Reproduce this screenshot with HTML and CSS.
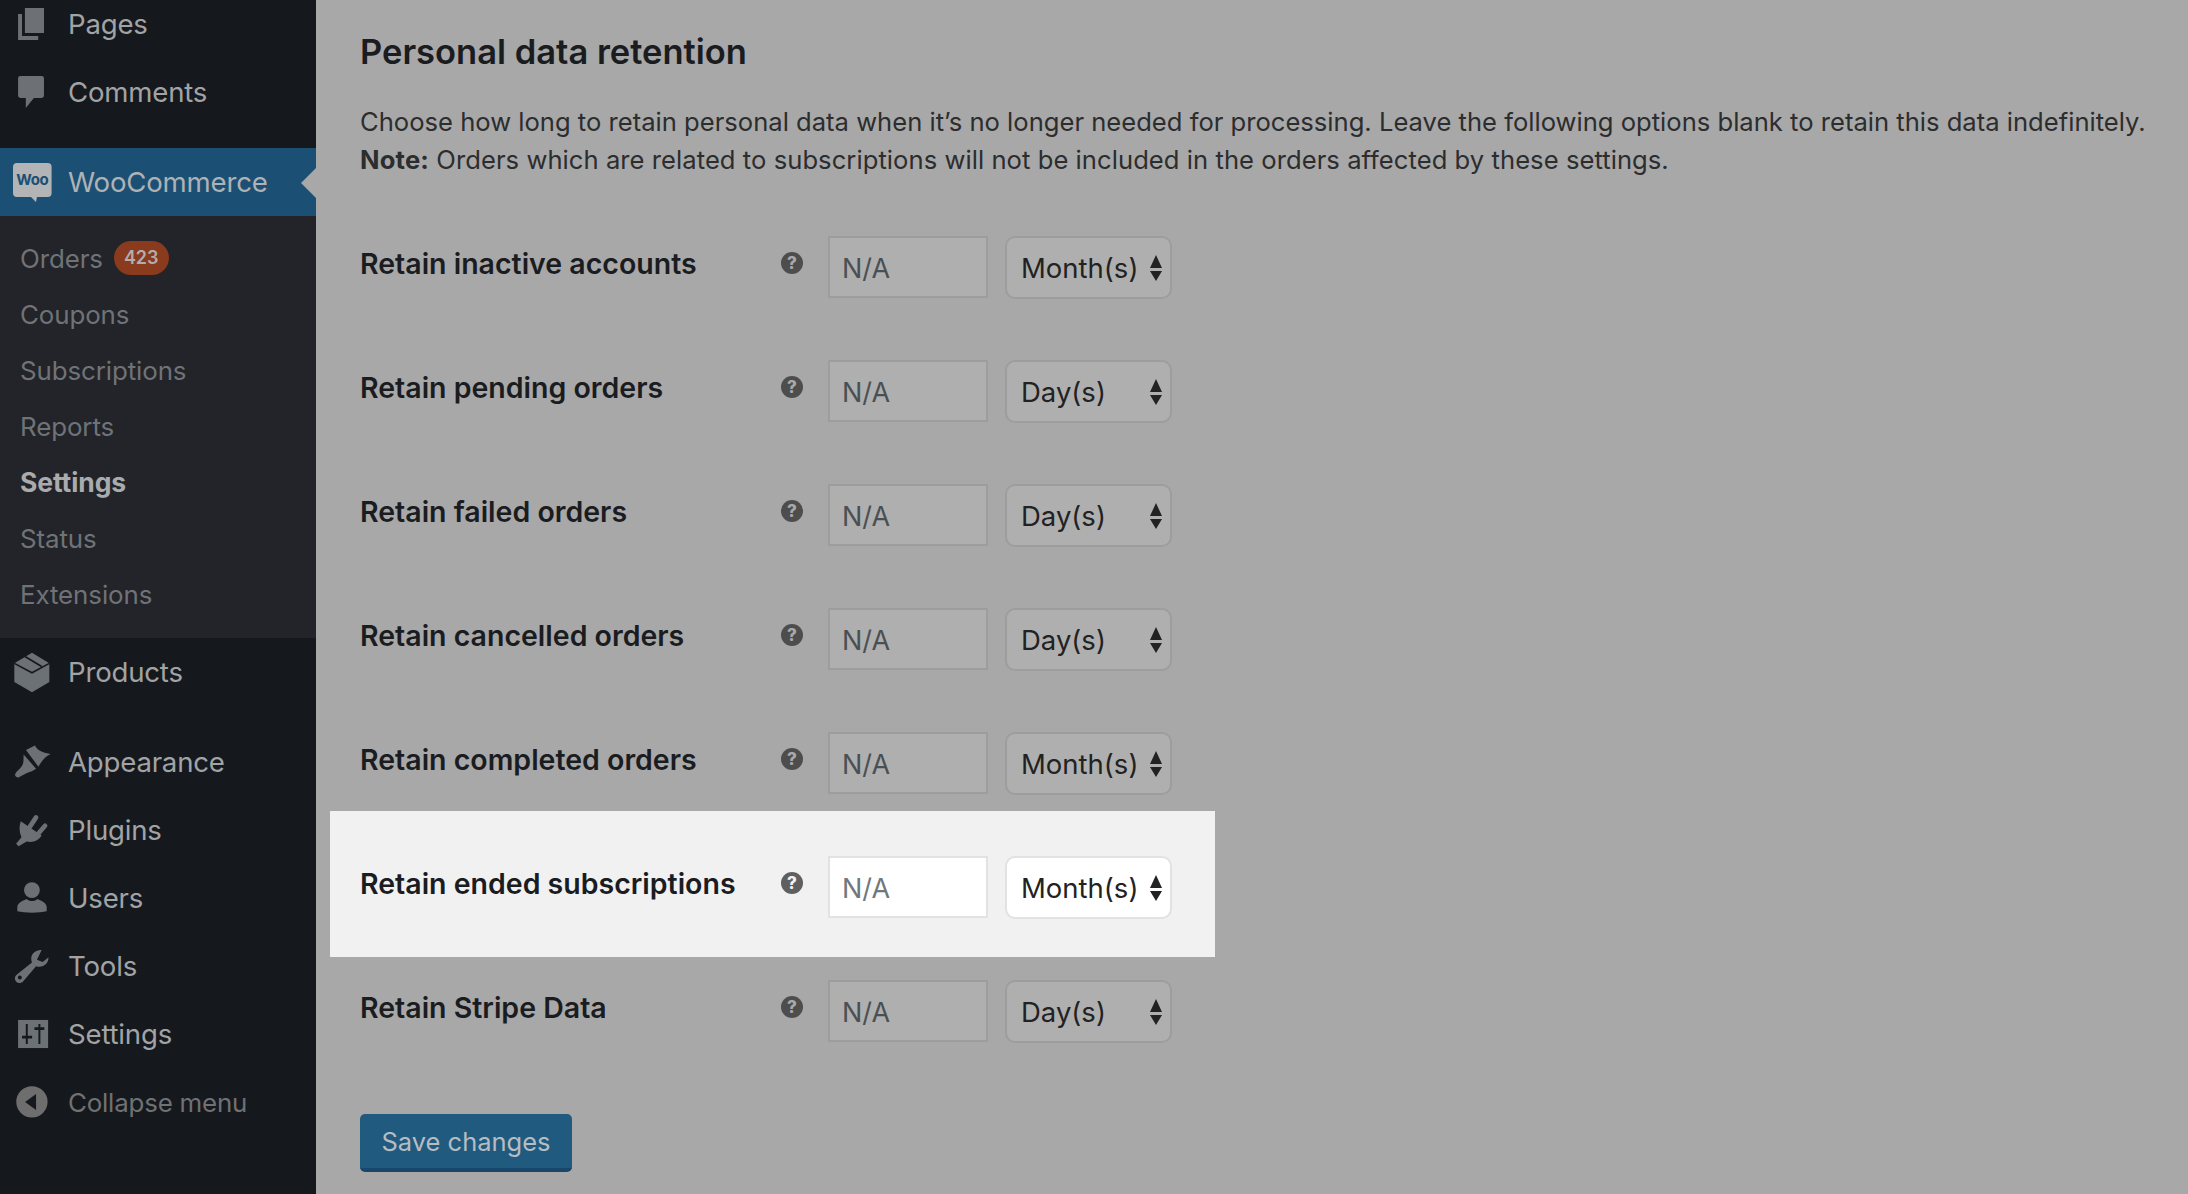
FILE: index.html
```html
<!DOCTYPE html>
<html lang="en">
<head>
<meta charset="utf-8">
<title>Personal data retention</title>
<link rel="stylesheet" href="styles.css">
</head>
<body>
<div class="page">
  <nav class="sidebar">
    <ul class="menu menu-top">
      <li class="item"><svg class="icon" viewBox="0 0 20 20"><path d="M5.500 1.100h10.600V15H5.500z"/><path d="M1.700 4.400h2.200v12.300h9v2.200H1.700z"/></svg><span>Pages</span></li>
      <li class="item"><svg class="icon" viewBox="0 0 20 20"><path d="M3 1.100h11.800a1.300 1.300 0 0 1 1.300 1.300V12a1.300 1.300 0 0 1-1.300 1.300H10.500L6 18.900v-5.600H3A1.300 1.300 0 0 1 1.700 12V2.400A1.300 1.300 0 0 1 3 1.100z"/></svg><span>Comments</span></li>
    </ul>
    <div class="item item-current">
      <svg class="icon icon-woo" viewBox="0 0 40 40"><path class="woo-bubble" d="M4 1h30.600a4 4 0 0 1 4 4v26a4 4 0 0 1-4 4H24l-1 5-5-5H4a4 4 0 0 1-4-4V5a4 4 0 0 1 4-4z"/><text class="woo-text" x="19.300" y="23">Woo</text></svg>
      <span>WooCommerce</span>
    </div>
    <ul class="submenu">
      <li class="sub-item">Orders<b class="badge">423</b></li>
      <li class="sub-item">Coupons</li>
      <li class="sub-item">Subscriptions</li>
      <li class="sub-item">Reports</li>
      <li class="sub-item sub-current">Settings</li>
      <li class="sub-item">Status</li>
      <li class="sub-item">Extensions</li>
    </ul>
    <div class="item"><svg class="icon" viewBox="0 0 20 20"><path d="M9.440-.74l9.630 5.940v10.300L9.440 21.300-.37 15.500V5.200z"/><path class="icon-cut" d="M-.37 5.200l9.810 5.200 9.630-5.200M5.550 1.400l9.250 5.560"/></svg><span>Products</span></div>
    <ul class="menu menu-gap">
      <li class="item"><svg class="icon" viewBox="0 0 20 20"><path d="M6.100 3.300L11.100.9c.9 1.900 2.900 3.900 8.700 4.700-2.300.9-4.800 3.400-6.800 7z"/><path d="M4.800 5.900l6.900 7.800-1.600 1c-2 1-4.300 1.500-7.600 3.700-1 .7-2.900-.5-2.400-1.800 1.300-2.200 4.900-3.800 4.600-8z"/></svg><span>Appearance</span></li>
      <li class="item"><svg class="icon" viewBox="0 0 20 20"><path d="M3.200 5.200l11.600 7.900c-1.800 2.900-4.800 4.100-8.300 3.300L2 19 .6 17.700l3-3.700C2.200 11 2.300 8 3.200 5.200z"/><path class="icon-prong" d="M11.700 3L8.300 8.100M16.700 7.600L13 11.900"/></svg><span>Plugins</span></li>
      <li class="item"><svg class="icon" viewBox="0 0 20 20"><circle cx="9.400" cy="5.600" r="4.400"/><path d="M1.300 17.400V15c0-2 2.700-3.400 5.200-4.400 1.400 1.500 4.500 1.500 5.900 0 2.500 1 5.200 2.400 5.200 4.400v2.400c-4 1-12.300 1-16.300 0z"/></svg><span>Users</span></li>
      <li class="item"><svg class="icon" viewBox="0 0 20 20"><path fill-rule="evenodd" d="M14.800 1.100C11.800.8 9 3 9 6c0 .7.1 1.400.4 2L.9 14.800c-1.200 1-1.300 2.800-.2 3.900 1.100 1.100 2.900 1 3.900-.2l7.100-8.400c.6.200 1.200.3 1.800.3 3 0 5.300-2.500 5.100-5.300l-3.200 2.700-3.200-1.300zM2.700 15.300a1.100 1.100 0 1 1 0 2.200 1.100 1.100 0 0 1 0-2.200z"/></svg><span>Tools</span></li>
      <li class="item"><svg class="icon" viewBox="0 0 20 20"><path d="M1.700 2.200h16.700v15.600H1.700z"/><path class="icon-knock" d="M6 4.400h1.100v11.200H6zM3.900 11h5.600v1.500H3.900zM13 4.400h1.100v11.200H13zM10.800 6.300h5.500v1.500h-5.500z"/></svg><span>Settings</span></li>
      <li class="item item-collapse"><svg class="icon" viewBox="0 0 20 20"><path fill-rule="evenodd" d="M9.400 1.200a8.700 8.700 0 1 1 0 17.400 8.700 8.700 0 0 1 0-17.400zM11.700 5.600v8.800L5.600 10z"/></svg><span>Collapse menu</span></li>
    </ul>
  </nav>
  <main class="content">
    <h2 class="title">Personal data retention</h2>
    <p class="intro">Choose how long to retain personal data when it’s no longer needed for processing. Leave the following options blank to retain this data indefinitely.<br><strong>Note:</strong> <span class="intro-note">Orders which are related to subscriptions will not be included in the orders affected by these settings.</span></p>
    <div class="rows">
      <div class="row"><label class="label">Retain inactive accounts</label><span class="help">?</span><span class="field">N/A</span><span class="select">Month(s)<i class="arrows"></i></span></div>
      <div class="row"><label class="label">Retain pending orders</label><span class="help">?</span><span class="field">N/A</span><span class="select">Day(s)<i class="arrows"></i></span></div>
      <div class="row"><label class="label">Retain failed orders</label><span class="help">?</span><span class="field">N/A</span><span class="select">Day(s)<i class="arrows"></i></span></div>
      <div class="row"><label class="label">Retain cancelled orders</label><span class="help">?</span><span class="field">N/A</span><span class="select">Day(s)<i class="arrows"></i></span></div>
      <div class="row"><label class="label">Retain completed orders</label><span class="help">?</span><span class="field">N/A</span><span class="select">Month(s)<i class="arrows"></i></span></div>
      <div class="row row-hl"><label class="label">Retain ended subscriptions</label><span class="help">?</span><span class="field">N/A</span><span class="select">Month(s)<i class="arrows"></i></span></div>
      <div class="row"><label class="label">Retain Stripe Data</label><span class="help">?</span><span class="field">N/A</span><span class="select">Day(s)<i class="arrows"></i></span></div>
    </div>
    <button class="save" type="button">Save changes</button>
  </main>
</div>
</body>
</html>
```

FILE: styles.css
```css
* { box-sizing: border-box; }
html, body { margin: 0; height: 100%; overflow: hidden; }
body { background: #a8a8a8; font-family: Inter, "Liberation Sans", sans-serif; color: #1c1e21; }
ul { list-style: none; margin: 0; padding: 0; }
.page { display: flex; height: 1194px; overflow: hidden; }

.sidebar { flex: 0 0 316px; background: #15191e; color: #a2a3a5; font-size: 27.600px; letter-spacing: -0.2px; }
.menu-top { margin-top: -10px; margin-bottom: 22px; }
.menu-gap { margin-top: 22px; }
.item { height: 68px; display: flex; align-items: center; padding-left: 15px; position: relative; }
.icon { width: 36px; height: 36px; flex: none; margin-right: 17px; fill: #6c7175; overflow: visible; }
.icon-cut { fill: none; stroke: #15191e; stroke-width: 0.9; }
.icon-prong { fill: none; stroke: #6c7175; stroke-width: 2.600; stroke-linecap: round; }
.icon-knock { fill: #15191e; }
.item-current { background: #1b4f74; color: #aeb2b5; }
.item-current::after { content: ""; position: absolute; right: 0; top: 20px; border: 15px solid transparent; border-right-color: #a8a8a8; border-left-width: 0; }
.icon-woo { width: 40px; height: 40px; margin-left: -2px; margin-right: 15px; }
.woo-bubble { fill: #b2b4b5; }
.woo-text { fill: #1b4f74; font-size: 15px; font-weight: 700; text-anchor: middle; letter-spacing: -0.3px; }
.item-collapse { color: #6f7173; font-size: 25.900px; }
.item-collapse .icon { fill: #6e6e6e; }

.submenu { background: #222429; padding: 14px 0 16px; font-size: 25.900px; color: #6f7377; letter-spacing: -0.1px; }
.sub-item { height: 56px; padding-left: 20px; display: flex; align-items: center; }
.sub-current { color: #aaabac; font-weight: 700; font-size: 26.500px; }
.badge { margin-left: 11px; height: 34px; padding: 0 10px; border-radius: 17px; background: #8a3a1d; color: #b0aeac; font-size: 18px; font-weight: 600; line-height: 34px; letter-spacing: 0; }

.content { flex: 1; padding: 0 0 0 44px; min-width: 0; }
.title { margin: 0; padding-top: 30px; font-size: 34.500px; line-height: 44px; font-weight: 600; color: #1a1c1f; letter-spacing: 0; }
.intro { margin: 29px 0 0; font-size: 25.600px; line-height: 38px; color: #2c2d2e; white-space: nowrap; letter-spacing: 0; }
.intro strong { font-weight: 700; letter-spacing: 0.2px; }
.intro-note { letter-spacing: 0.05px; }
.rows { margin-top: 26px; display: flex; flex-direction: column; }
.row { height: 124px; display: flex; align-items: flex-start; padding-top: 31px; }
.row-hl { height: 146px; width: 885px; background: #f1f1f1; margin: -14px 0 -8px -30px; padding: 45px 0 0 30px; position: relative; }
.label { flex: 0 0 421px; font-size: 28.500px; font-weight: 600; line-height: 36px; margin-top: 10px; color: #1a1c1f; }
.help { flex: none; width: 22px; height: 22px; border-radius: 50%; margin: 16px 25px 0 0; background: #4d4d4d; color: #a8a8a8; font-size: 17px; font-weight: 800; line-height: 22px; text-align: center; }
.row-hl .help { background: #5f5f5f; color: #f1f1f1; }
.field { flex: none; width: 160px; height: 62px; padding: 0 12px; margin-right: 17px; background: #afafaf; border: 2px solid #9d9d9d; font-size: 27px; line-height: 61px; color: #4a4f54; }
.select { flex: none; width: 167px; height: 63px; padding: 0 14px; border-radius: 10px; background: #afafaf; border: 2px solid #9d9d9d; font-size: 27.500px; line-height: 60px; color: #222; position: relative; }
.row-hl .field, .row-hl .select { background: #fff; border-color: #e2e2e2; }
.row-hl .field { color: #72777c; }
.arrows { position: absolute; right: 7px; top: 17px; width: 13px; height: 26px; }
.arrows::before, .arrows::after { content: ""; position: absolute; left: 0; border: 6.500px solid transparent; border-top-width: 0; border-bottom: 13px solid #222; }
.arrows::after { top: 16px; border-bottom-width: 0; border-top: 10px solid #222; }

.save { display: block; margin-top: 41px; width: 212px; height: 58px; padding: 0; background: #215a7f; border: 0; border-bottom: 4px solid #19466a; border-radius: 5px; color: #b6bcc0; font-family: inherit; font-size: 25.500px; }
```
